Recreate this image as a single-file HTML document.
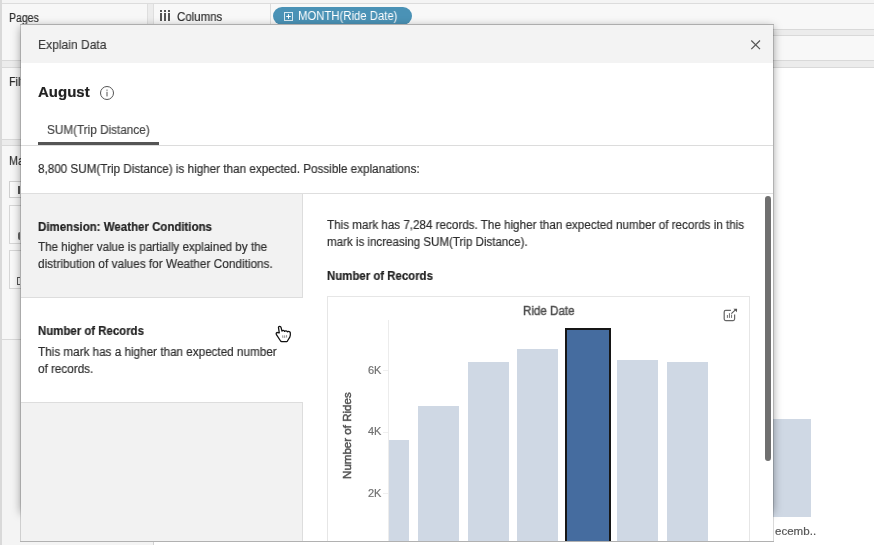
<!DOCTYPE html>
<html>
<head>
<meta charset="utf-8">
<title>Explain Data</title>
<style>
html,body{margin:0;padding:0;}
body{width:874px;height:545px;overflow:hidden;position:relative;background:#ffffff;font-family:"Liberation Sans",sans-serif;color:#2e2e2e;}
.abs{position:absolute;}
.t{position:absolute;white-space:nowrap;line-height:1;transform-origin:0 0;will-change:transform;-webkit-text-stroke:0.18px currentColor;}
/* ---------- background app ---------- */
#bg{left:0;top:0;width:874px;height:545px;background:#fff;}
#leftpane{left:0;top:0;width:153px;height:545px;background:#ececec;}
#leftstrip{left:0;top:0;width:2px;height:545px;background:#d9d9d9;}
#topband{left:0;top:0;width:874px;height:3px;background:#f4f4f4;}
#topline{left:0;top:3px;width:874px;height:1px;background:#dcdcdc;}
.pnl{background:#f7f7f7;border-right:1px solid #dedede;}
#colshelf{left:153px;top:4px;width:721px;height:25px;background:#f8f8f8;border-left:1px solid #dedede;}
#rowshelf{left:153px;top:36px;width:721px;height:25px;background:#f8f8f8;border-left:1px solid #dedede;}
.hline{position:absolute;height:1px;background:#d9d9d9;}
/* ---------- dialog ---------- */
#dshadow{left:21px;top:26px;width:752px;height:486px;box-shadow:0 1px 9px rgba(0,0,0,0.4);}
#dlg{left:21px;top:25px;width:752px;height:516px;background:#fff;box-shadow:0 0 0 1px rgba(0,0,0,0.15);overflow:hidden;}
#dlghead{left:0;top:0;width:752px;height:38px;background:#f3f3f3;}
#tabline{left:0;top:120px;width:752px;height:1px;background:#dcdcdc;}
#tabul{left:17px;top:117px;width:121px;height:3px;background:#555;}
#sep{left:0;top:168px;width:752px;height:1px;background:#dedede;}
#leftcol{left:0;top:169px;width:281px;height:347px;background:#f2f2f2;border-right:1px solid #dddddd;box-sizing:content-box;}
#item2{left:0;top:272px;width:282px;height:104px;background:#fff;border-top:1px solid #dddddd;border-bottom:1px solid #dddddd;}
#chart{left:306px;top:271px;width:421px;height:260px;border:1px solid #e6e6e6;border-bottom:none;background:#fff;}
#sbar{left:744px;top:171px;width:6px;height:265px;background:#707070;border-radius:3px;}
.bar{position:absolute;background:#cfd8e4;}
</style>
</head>
<body>
<div id="bg" class="abs">
  <div id="leftpane" class="abs"></div>
  <div id="topband" class="abs"></div>
  <div id="topline" class="abs"></div>
  <!-- left side panels -->
  <div class="abs pnl" style="left:2px;top:4px;width:145px;height:56px;"></div>
  <div class="abs pnl" style="left:2px;top:68px;width:145px;height:71px;"></div>
  <div class="abs pnl" style="left:2px;top:146px;width:145px;height:193px;"></div>
  <div class="abs" style="left:2px;top:340px;width:151px;height:205px;background:#f4f4f4;border-right:1px solid #d2d2d2;"></div>
  <div class="hline" style="left:0;top:139px;width:153px;"></div>
  <div class="hline" style="left:0;top:145px;width:153px;"></div>
  <div class="hline" style="left:0;top:339px;width:153px;"></div>
  <div class="abs" style="left:9px;top:181px;width:60px;height:17px;border:1px solid #cfcfcf;background:#fbfbfb;box-sizing:border-box;"></div>
  <div class="abs" style="left:9px;top:205px;width:40px;height:39px;border:1px solid #d6d6d6;background:#f9f9f9;box-sizing:border-box;"></div>
  <div class="abs" style="left:9px;top:250px;width:40px;height:39px;border:1px solid #d6d6d6;background:#f9f9f9;box-sizing:border-box;"></div>
  <div class="abs" style="left:18px;top:186px;width:2px;height:8px;background:#555;"></div>
  <div class="abs" style="left:18px;top:232px;width:2px;height:8px;background:#666;border-radius:2px 0 0 2px;"></div>
  <div class="abs" style="left:17px;top:277px;width:3px;height:8px;border:1px solid #555;border-right:none;box-sizing:border-box;"></div>
  <!-- shelves -->
  <div class="abs" style="left:153px;top:4px;width:721px;height:64px;background:#ececec;"></div>
  <div id="colshelf" class="abs"></div>
  <div id="rowshelf" class="abs"></div>
  <div class="hline" style="left:153px;top:29px;width:721px;"></div>
  <div class="hline" style="left:153px;top:35px;width:721px;"></div>
  <div class="hline" style="left:0;top:60px;width:874px;"></div>
  <div class="hline" style="left:0;top:67px;width:874px;"></div>
  <div class="abs" style="left:270px;top:4px;width:1px;height:25px;background:#dcdcdc;"></div>
  <div id="leftstrip" class="abs"></div>
  <div class="t" id="tpages" style="left:9.4px;top:11.5px;font-size:12px;transform:scaleX(0.876);">Pages</div>
  <div class="abs" style="left:160px;top:10px;width:2px;height:2px;background:#555;box-shadow:4px 0 0 #555,8px 0 0 #555;"></div>
  <div class="abs" style="left:160px;top:13px;width:2px;height:7.5px;background:#555;box-shadow:4px 0 0 #555,8px 0 0 #555;"></div>
  <div class="t" id="tcols" style="left:177.3px;top:10.7px;font-size:12px;transform:scaleX(0.956);">Columns</div>
  <div class="t" id="tfil" style="left:9.4px;top:76px;font-size:12px;transform:scaleX(0.9);">Filters</div>
  <div class="t" id="tma" style="left:9.4px;top:155px;font-size:12px;transform:scaleX(0.9);">Marks</div>
  <!-- pill -->
  <div class="abs" id="pill" style="left:272.5px;top:7px;width:139.5px;height:18px;border-radius:9px;background:#4a92b6;"></div>
  <svg class="abs" style="left:284px;top:12px;" width="9" height="9" viewBox="0 0 9 9"><rect x="0.5" y="0.5" width="8" height="8" fill="none" stroke="#d8eaf2" stroke-width="1"/><path d="M2.2 4.5H6.8M4.5 2.2V6.8" stroke="#fff" stroke-width="1"/></svg>
  <div class="t" id="tpill" style="left:297.9px;top:10.4px;font-size:12px;color:#fff;-webkit-text-stroke:0;transform:scaleX(0.944);">MONTH(Ride Date)</div>
  <!-- behind bar -->
  <div class="abs" style="left:773px;top:419px;width:38px;height:98px;background:#cfd8e4;"></div>
  <div class="t" id="tdec" style="left:775.3px;top:525.8px;font-size:11px;color:#555;transform:scaleX(1.05);">ecemb..</div>
</div>

<div id="dshadow" class="abs"></div>
<div class="abs" style="left:20px;top:541px;width:754px;height:1px;background:#d0d0d0;"></div>
<div class="abs" style="left:20px;top:24px;width:754px;height:1px;background:#cccccc;"></div>
<div id="dlg" class="abs">
  <div id="dlghead" class="abs"></div>
  <div class="t" id="ttitle" style="left:17px;top:13.4px;font-size:13px;color:#3a3a3a;transform:scaleX(0.929);">Explain Data</div>
  <svg class="abs" style="left:729px;top:14px;" width="12" height="12" viewBox="0 0 12 12"><path d="M1.3 1.5 L10 10.2 M10 1.5 L1.3 10.2" stroke="#555" stroke-width="1.2" fill="none"/></svg>
  <div class="t" id="taug" style="left:17px;top:58.7px;font-size:15px;font-weight:bold;color:#222;transform:scaleX(1.0);">August</div>
  <svg class="abs" style="left:78px;top:60px;" width="16" height="16" viewBox="0 0 16 16"><circle cx="8" cy="8" r="6.5" fill="none" stroke="#555" stroke-width="1"/><rect x="7.5" y="6.8" width="1" height="4.6" fill="#555"/><rect x="7.5" y="4.6" width="1" height="1.2" fill="#555"/></svg>
  <div class="t" id="ttab" style="left:26.2px;top:99px;font-size:12px;color:#444;transform:scaleX(0.978);">SUM(Trip Distance)</div>
  <div id="tabline" class="abs"></div>
  <div id="tabul" class="abs"></div>
  <div class="t" id="tsum" style="left:17px;top:138px;font-size:12px;transform:scaleX(0.974);">8,800 SUM(Trip Distance) is higher than expected. Possible explanations:</div>
  <div id="sep" class="abs"></div>
  <div id="leftcol" class="abs"></div>
  <div id="item2" class="abs"></div>

  <div class="t" id="l1a" style="left:17px;top:195.6px;font-size:12px;font-weight:bold;color:#222;transform:scaleX(0.957);">Dimension: Weather Conditions</div>
  <div class="t" id="l1b" style="left:17px;top:216.4px;font-size:12px;transform:scaleX(0.967);">The higher value is partially explained by the</div>
  <div class="t" id="l1c" style="left:17px;top:233.4px;font-size:12px;transform:scaleX(0.984);">distribution of values for Weather Conditions.</div>

  <div class="t" id="l2a" style="left:17px;top:300.3px;font-size:12px;font-weight:bold;color:#222;transform:scaleX(0.951);">Number of Records</div>
  <div class="t" id="l2b" style="left:17px;top:321.3px;font-size:12px;transform:scaleX(0.975);">This mark has a higher than expected number</div>
  <div class="t" id="l2c" style="left:17px;top:338px;font-size:12px;transform:scaleX(0.975);">of records.</div>

  <div class="t" id="r1" style="left:306px;top:194px;font-size:12px;transform:scaleX(0.97);">This mark has 7,284 records. The higher than expected number of records in this</div>
  <div class="t" id="r2" style="left:306px;top:210.9px;font-size:12px;transform:scaleX(0.963);">mark is increasing SUM(Trip Distance).</div>
  <div class="t" id="r3" style="left:306px;top:244.6px;font-size:12px;font-weight:bold;color:#222;transform:scaleX(0.951);">Number of Records</div>

  <div id="chart" class="abs"></div>
  <div class="t" id="tride" style="left:501.8px;top:280px;font-size:12px;color:#505050;-webkit-text-stroke:0.45px #505050;transform:scaleX(0.965);">Ride Date</div>
  <div class="abs" style="left:367px;top:295px;width:1px;height:221px;background:#ececec;"></div>
  <div class="bar" style="left:368px;top:415px;width:20px;height:101px;"></div>
  <div class="bar" style="left:397px;top:381px;width:41px;height:135px;"></div>
  <div class="bar" style="left:447px;top:337px;width:41px;height:179px;"></div>
  <div class="bar" style="left:496px;top:324px;width:41px;height:192px;"></div>
  <div class="abs" style="left:544px;top:303px;width:46px;height:220px;background:#456c9f;border:2px solid #161616;box-sizing:border-box;"></div>
  <div class="bar" style="left:596px;top:335px;width:41px;height:181px;"></div>
  <div class="bar" style="left:646px;top:337px;width:41px;height:179px;"></div>
  <div class="abs" style="left:362px;top:345px;width:5px;height:1px;background:#efefef;"></div>
  <div class="abs" style="left:362px;top:407px;width:5px;height:1px;background:#efefef;"></div>
  <div class="abs" style="left:362px;top:468px;width:5px;height:1px;background:#efefef;"></div>
  <div class="t" id="t6k" style="left:346.6px;top:339.8px;font-size:11px;color:#707070;">6K</div>
  <div class="t" id="t4k" style="left:346.6px;top:400.8px;font-size:11px;color:#707070;">4K</div>
  <div class="t" id="t2k" style="left:346.6px;top:462.8px;font-size:11px;color:#707070;">2K</div>
  <div class="t" id="tnum" style="left:321.3px;top:453.9px;font-size:11px;color:#505050;-webkit-text-stroke:0.45px #505050;transform:rotate(-90deg) scaleX(1.05);">Number of Rides</div>
  <svg class="abs" style="left:241px;top:291px;" width="48" height="30" viewBox="0 0 872 545">
    <path d="M322 188 C300 188 298 205 300 215 L314 305 L285 300 C262 298 250 320 262 338 L335 450 C340 462 350 466 360 466 L450 466 C462 466 466 452 470 440 L505 385 C515 360 518 330 514 302 C510 285 480 272 462 288 C455 265 420 262 410 280 C400 258 375 258 362 272 L347 210 C345 195 335 188 322 188 Z" fill="#fff" stroke="#111" stroke-width="23" stroke-linejoin="round"/>
    <path d="M376 352 L379 398 M411 352 L413 398 M446 348 L448 392" stroke="#444" stroke-width="11" fill="none"/>
  </svg>
  <svg class="abs" style="left:689px;top:271px;" width="48" height="30" viewBox="0 0 872 545">
    <path d="M380 262 L285 262 Q258 262 258 289 L258 420 Q258 447 285 447 L420 447 Q447 447 447 420 L447 335" fill="none" stroke="#666" stroke-width="22"/>
    <path d="M316 345 V398 M353 312 V398 M392 338 V398" stroke="#666" stroke-width="17" fill="none"/>
    <path d="M388 322 L462 252" stroke="#555" stroke-width="20" fill="none"/>
    <path d="M425 232 L492 230 L490 297 Z" fill="#555"/>
  </svg>
  <div id="sbar" class="abs"></div>
</div>
</body>
</html>
